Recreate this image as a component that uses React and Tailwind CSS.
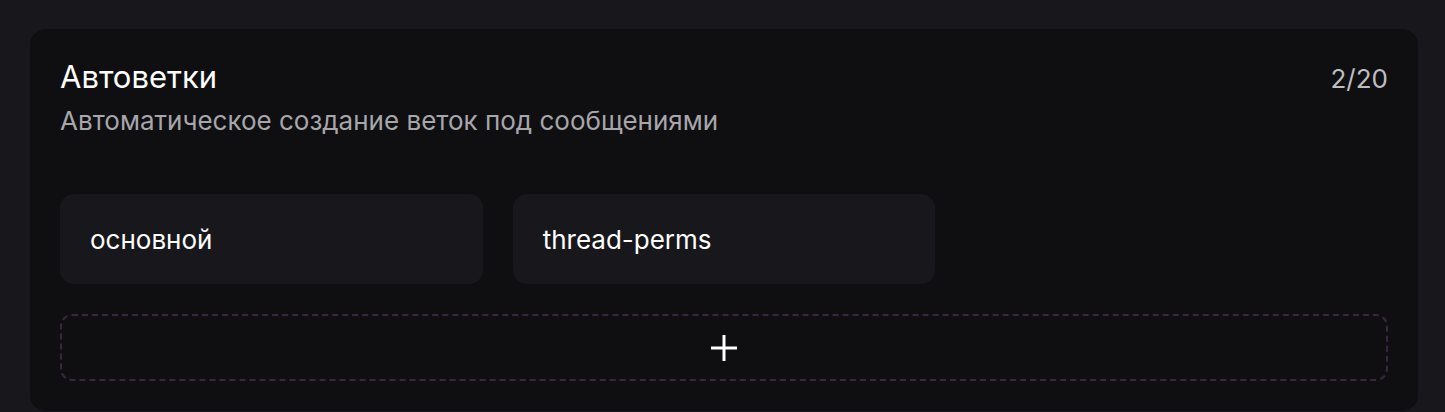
export default function App() {
  const threads = ['основной', 'thread-perms']

  return (
    <div className="min-h-screen bg-[#18181c] pl-[30px] pr-[27px] pt-[29px]" style={{ fontFamily: 'Inter, "Noto Sans", sans-serif' }}>
      <div className="rounded-[16px] bg-[#0f0f11] p-[30px]">
        <div className="flex items-baseline justify-between">
          <div>
            <div className="text-[31px] leading-[35px] text-white">Автоветки</div>
            <div className="mt-[11px] text-[26px] leading-[32px] text-[#a6a6ab]">Автоматическое создание веток под сообщениями</div>
          </div>
          <div className="text-[26px] leading-[32px] text-[#bdbdc2]">2/20</div>
        </div>

        <div className="mt-[57px] grid grid-cols-3 gap-[30px]">
          {threads.map((name) => (
            <div key={name} className="flex h-[90px] items-center rounded-[14px] bg-[#18181c] px-[30px] text-[26px] text-white">
              {name}
            </div>
          ))}
        </div>

        <button className="mt-[30px] flex h-[67px] w-full items-center justify-center rounded-[12px] border-2 border-dashed border-[#38273f]">
          <svg width="28" height="28" viewBox="0 0 28 28" fill="none" stroke="white" strokeWidth="3">
            <path d="M14 1v26M1 14h26" />
          </svg>
        </button>
      </div>
    </div>
  )
}
